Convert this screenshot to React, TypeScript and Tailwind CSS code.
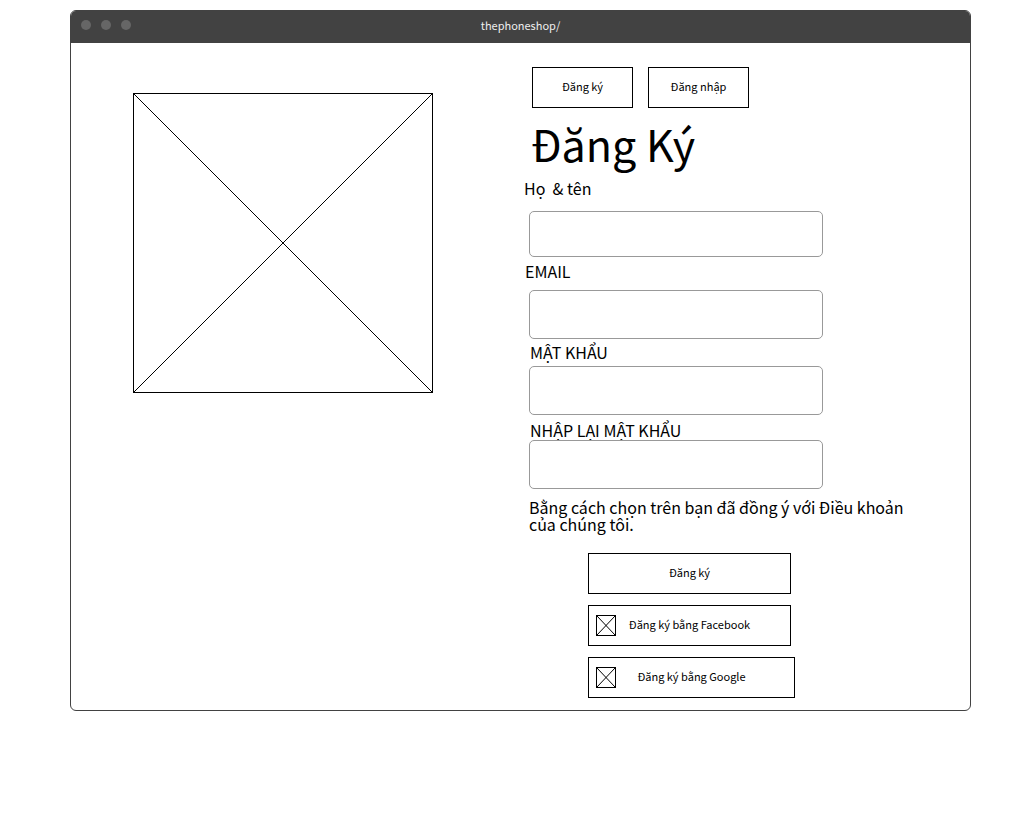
import type { ReactNode } from "react";

function CrossedBox({ className, label }: { className: string; label?: string }) {
  return (
    <svg
      className={className}
      viewBox="0 0 100 100"
      preserveAspectRatio="none"
      role={label ? "img" : undefined}
      aria-label={label}
      aria-hidden={label ? undefined : true}
    >
      <path
        d="M0 0 L100 100 M100 0 L0 100"
        fill="none"
        stroke="black"
        strokeWidth="1"
        vectorEffect="non-scaling-stroke"
      />
    </svg>
  );
}

interface FieldProps {
  id: string;
  type: string;
  labelClass: string;
  inputClass: string;
  children: ReactNode;
}

function Field({ id, type, labelClass, inputClass, children }: FieldProps) {
  return (
    <div className="flex flex-col items-start">
      <label htmlFor={id} className={`whitespace-pre text-[16px] leading-[17px] ${labelClass}`}>
        {children}
      </label>
      <input
        id={id}
        name={id}
        type={type}
        className={`ml-[5px] w-[294px] max-w-full rounded-[5px] border border-[#999999] bg-transparent px-3 text-[16px] ${inputClass}`}
      />
    </div>
  );
}

function SocialButton({ className, children }: { className: string; children: ReactNode }) {
  return (
    <button
      type="button"
      className={`grid h-[41px] grid-cols-[20px_1fr_20px] items-center border border-black px-[7px] text-[11px] leading-[12px] ${className}`}
    >
      <CrossedBox className="h-[21px] w-[20px] border border-black" />
      <span className="pb-1">{children}</span>
    </button>
  );
}

export default function App() {
  return (
    <div className="bg-white pt-[10px] pr-[50px] pb-10 pl-[70px] font-['Noto_Sans_CJK_JP','Noto_Sans',sans-serif] text-black">
      <div className="overflow-hidden rounded-md border border-[#424242]">
        <header className="grid h-8 grid-cols-[1fr_auto_1fr] items-center bg-[#424242]">
          <div className="flex gap-[10px] pb-1 pl-[10px]">
            <span className="size-[10px] rounded-full bg-[#666666]" />
            <span className="size-[10px] rounded-full bg-[#666666]" />
            <span className="size-[10px] rounded-full bg-[#666666]" />
          </div>
          <span className="pb-1 text-[11px] leading-[12px] text-[#eeeeee]">thephoneshop/</span>
        </header>

        <main className="flex items-start pb-3 pl-[62px]">
          <CrossedBox label="Hình ảnh" className="mt-[50px] size-[300px] shrink-0 border border-black" />

          <section className="ml-[91px] min-w-0 flex-1 pt-6">
            <nav className="flex gap-[15px] pl-2 text-[11px] leading-[12px]">
              <button type="button" className="h-[41px] w-[101px] border border-black pb-1">
                Đăng ký
              </button>
              <button type="button" className="h-[41px] w-[101px] border border-black pb-1">
                Đăng nhập
              </button>
            </nav>

            <h1 className="mt-3 pl-[7px] text-[43px] leading-[46px]">Đăng Ký</h1>

            <form className="mt-[14px]" onSubmit={(event) => event.preventDefault()}>
              <Field id="name" type="text" labelClass="mb-[14px]" inputClass="mb-[6px] h-[46px]">
                {"Họ  & tên"}
              </Field>
              <Field id="email" type="email" labelClass="mb-[10px] pl-px" inputClass="mb-[5px] h-[49px]">
                EMAIL
              </Field>
              <Field id="password" type="password" labelClass="mb-[5px] pl-[6px]" inputClass="mb-[7px] h-[49px]">
                MẬT KHẨU
              </Field>
              <Field id="confirm" type="password" labelClass="mb-px pl-[6px]" inputClass="mb-[10px] h-[49px]">
                NHẬP LẠI MẬT KHẨU
              </Field>

              <p className="mr-[60px] pl-[5px] text-[16px] leading-[17px]">
                Bằng cách chọn trên bạn đã đồng ý với Điều khoản của chúng tôi.
              </p>

              <div className="mt-5 ml-16 flex flex-col items-start gap-[11px]">
                <button
                  type="submit"
                  className="h-[41px] w-[203px] border border-black pb-1 text-[11px] leading-[12px]"
                >
                  Đăng ký
                </button>
                <SocialButton className="w-[203px]">Đăng ký bằng Facebook</SocialButton>
                <SocialButton className="w-[207px]">Đăng ký bằng Google</SocialButton>
              </div>
            </form>
          </section>
        </main>
      </div>
    </div>
  );
}
